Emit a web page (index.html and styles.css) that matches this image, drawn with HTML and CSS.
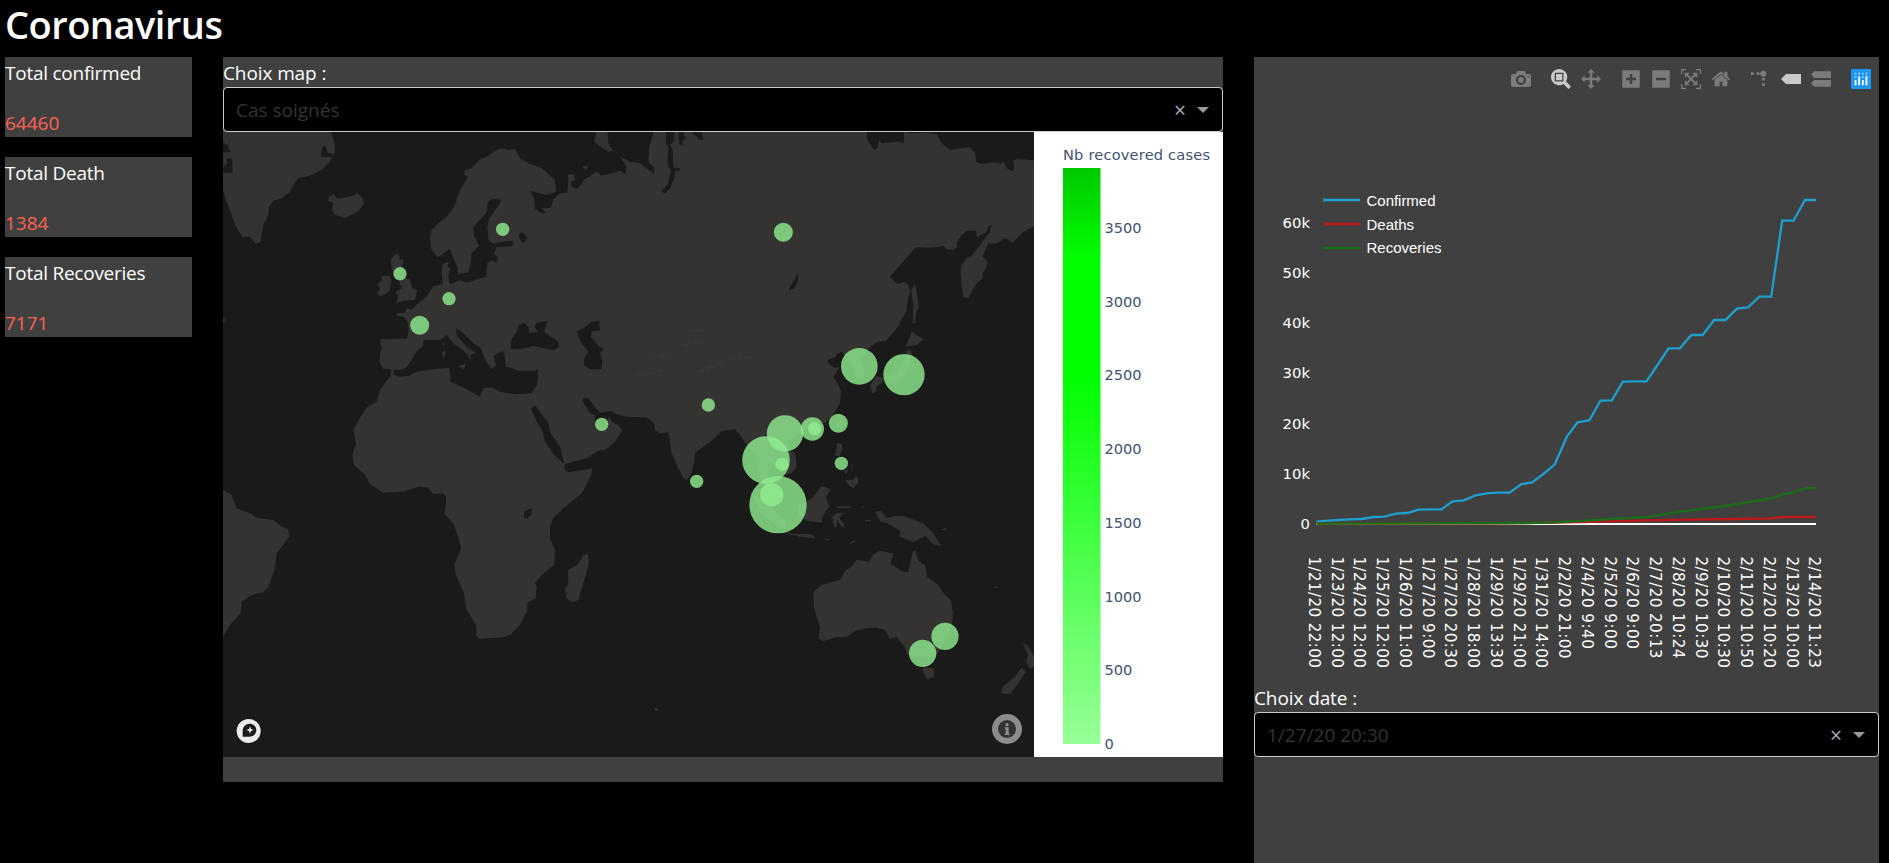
FILE: index.html
```html
<!DOCTYPE html>
<html lang="fr">
<head>
<meta charset="utf-8">
<title>Coronavirus</title>
<link rel="stylesheet" href="styles.css">
</head>
<body>
<h1 class="title">Coronavirus</h1>
<main class="board">
  <section class="totals">
    <div class="card"><p class="card-label">Total confirmed</p><p class="card-value">64460</p></div>
    <div class="card"><p class="card-label">Total Death</p><p class="card-value">1384</p></div>
    <div class="card"><p class="card-label">Total Recoveries</p><p class="card-value">7171</p></div>
  </section>

  <section class="panel map-panel">
    <label class="field-label">Choix map :</label>
    <div class="select"><span class="select-value">Cas soignés</span><span class="clear">×</span><span class="arrow"></span></div>
    <div class="map-row">
      <svg class="map" viewBox="9 6 2433 1875" width="811" height="625">
        <g class="land">
          <!-- Greenland, Iceland, British Isles -->
          <path d="M9 0H330L344 40V68L330 95 305 120 270 137 238 143 225 155 210 185 185 205 160 212 147 230 145 255 130 285 122 335 108 342 88 320 68 322 45 285 30 240 20 215 9 180z"/>
          <path d="M325 200L340 192 353 207 400 197 412 190 428 205 431 222 415 243 395 255 375 264 345 255 335 238 340 220 325 212z"/>
          <path d="M512 388L530 370 540 380 538 390 552 388 545 412 552 440 570 450 577 475 592 480 585 510 550 512 527 520 535 500 527 485 545 475 535 450 520 435 515 415z"/>
          <path d="M487 438L510 437 514 455 508 485 485 497 470 492 480 478 473 462 485 452z"/>
          <!-- Eurasia and Africa -->
          <path d="M800 80L820 65 840 55 865 60 885 57 900 85 925 100 965 115 1005 150 1008 185 980 195 930 183 943 205 945 235 960 248 978 250 965 235 993 233 1000 208 1020 190 1042 188 1045 133 1063 133 1065 150 1053 155 1055 170 1070 177 1083 165 1090 150 1130 125 1145 137 1200 122 1215 132 1220 110 1200 80 1230 95 1260 100 1280 115 1302 132 1303 115 1285 95 1288 50 1303 0H1940L1942 30 1955 50 1963 60 1972 55 1978 30 1985 40 2030 35 2052 40V6L2075 10 2120 8 2150 12 2165 40 2190 60 2220 55 2250 52 2265 70 2268 95 2285 102 2320 97 2342 102 2350 92 2360 115 2375 123 2383 118 2380 92 2390 86 2445 92V287L2410 305 2378 338 2360 325 2350 328 2325 342 2305 340 2298 355 2288 380 2302 395 2298 415 2288 430V445L2270 460 2245 503H2230L2225 470 2222 430 2225 405 2240 385 2255 378 2275 350 2295 325 2308 310 2315 285 2305 288 2300 305 2270 322 2268 302 2240 303 2225 315 2210 340 2212 350 2200 360 2180 358 2170 347 2150 352 2120 353 2093 352 2085 355 2010 440 2032 462 2052 455 2065 465 2070 485 2065 500 2058 545 2030 595 1998 632 1970 635 1948 655 1920 690 1932 710V745L1910 750 1905 720 1895 700 1865 665 1850 672 1845 682 1822 690 1830 705 1845 713 1860 710 1840 742 1855 765 1863 785 1860 820 1845 845 1815 880 1805 875 1780 890 1740 910 1700 935 1715 960 1727 975 1730 1010 1715 1030 1695 1035 1680 1015 1655 1000 1645 1000V1050L1665 1090 1668 1110 1635 1070 1620 1040 1615 1000 1605 970 1590 960 1578 942 1560 915 1545 897 1525 900 1500 905 1495 915 1470 935 1425 968 1422 995 1415 1030 1400 1050 1390 1045 1370 1005 1355 970 1345 907 1320 910 1305 900 1302 880 1280 862 1220 860 1180 850 1180 843 1140 848 1125 830 1105 805 1090 805 1088 815 1110 850 1125 855 1125 885 1155 890 1168 858 1175 875 1195 885 1207 900 1185 935 1160 957 1135 962 1100 985 1035 1002 1033 1015 1043 1027 1075 1022 1117 1015 1112 1040 1085 1090 1030 1135 1000 1165 990 1190V1225L1005 1260 1003 1305 985 1318 965 1335 945 1360 950 1370 947 1405 922 1418 920 1445 900 1485 870 1515 850 1522 780 1527 769 1518 768 1485 738 1435 732 1390 708 1335 703 1305 723 1255 715 1220 700 1180 673 1152 678 1125V1100L670 1090 640 1092 622 1072 595 1070 550 1085 490 1088 450 1062 435 1035 402 1005 397 975 408 940 400 900 418 868 440 832 470 815 480 780 495 758 512 738 514 716 522 722 520 735 540 740 565 738 590 725 640 718 688 714 692 740 690 755 735 775 780 800 790 775 815 772 840 785 885 793 935 790 950 765 955 740 953 718 945 722 895 722 875 715 858 710 855 690 853 665 840 665 820 678 828 705 815 718 795 690 783 655 760 640 725 605 708 595 710 615 740 650 768 670 750 675 755 695 740 670 700 640 680 615 660 630 612 630 608 648 585 670 575 690 560 712 540 720 510 718 490 716 478 695 480 675 485 655 480 632 485 625 495 628 562 625 565 600 563 575 550 560 530 557V550L555 548 560 535 575 540 590 525 620 500 640 468 668 462 665 425 668 402 686 395 683 410 690 415 685 440 690 463 720 450 742 458 770 448 798 440 802 400 815 390 832 400V382L822 370 830 352 878 348 880 332 860 333 820 341 805 330 802 290 808 265 830 235 843 215 840 207H812L803 220 798 250 780 270 760 290 762 318 777 348 755 370 752 400 745 427 713 432 712 410 700 385 690 355 665 375 652 382 635 360 630 325 635 300 655 280 680 260 705 225 720 180 745 140 732 135 735 120 755 115 780 88z"/>
          <path d="M1130 0H1162L1165 40 1178 62 1165 65 1142 50 1123 35z"/>
          <path d="M1088 112L1096 106 1103 110 1098 120z"/>
          <path d="M712 708L738 702 732 717zM668 640H674L672 652zM667 665L677 662 675 680 668 683z"/>
          <!-- East Asia islands -->
          <path d="M2073 480L2085 462 2090 490 2097 530 2088 550 2085 580H2078L2080 520zM2075 605L2110 628 2090 645 2058 650 2065 630z"/>
          <path d="M2070 660L2077 676 2065 720 2040 750 2000 755 2010 738 2040 715 2057 680 2060 662zM1950 765L1970 738 1990 745 1985 760 1968 770V785L1957 790zM1848 895L1852 878 1865 868 1862 885z"/>
          <!-- South-East Asia -->
          <path d="M1587 1080L1615 1105 1660 1140 1695 1165 1700 1195 1680 1195 1630 1155zM1695 1205L1720 1212 1775 1213 1788 1225 1740 1220 1705 1212zM1760 1115L1780 1100 1805 1068 1832 1078 1818 1100 1828 1130 1810 1155 1805 1178 1760 1172 1735 1155 1733 1125z"/>
          <path d="M1837 1160L1850 1148 1872 1150 1857 1162 1875 1190H1865L1852 1172 1848 1193 1842 1190zM1850 1129H1892V1134H1850zM1925 1125L1931 1128 1929 1138zM1935 1170H1953V1173H1935zM1885 1243L1900 1232 1910 1231 1898 1239zM1815 1227H1830V1230H1815z"/>
          <path d="M1852 938L1865 942 1868 955 1858 980 1845 975zM1875 1050H1898L1910 1037 1915 1055 1902 1075 1888 1068zM1870 1022L1884 1020 1880 1033zM1894 1005L1899 1008 1896 1019z"/>
          <path d="M1965 1145L1982 1143 2000 1165 2025 1157 2050 1158 2110 1180 2137 1207 2163 1247 2140 1243 2115 1218 2080 1237 2040 1220V1202L2000 1178 1982 1175zM2160 1198L2172 1197 2182 1190 2176 1201z"/>
          <!-- Australia, Tasmania, New Zealand -->
          <path d="M1780 1385L1805 1365 1860 1350 1875 1322 1892 1312 1910 1290 1932 1292 1945 1297 1960 1273 1980 1263 2020 1270 2012 1300 2045 1323 2065 1327 2078 1265 2085 1260 2095 1292 2115 1305 2122 1340 2155 1365 2170 1388 2192 1410 2199 1450 2195 1490 2160 1560 2145 1580 2090 1580 2060 1575 2057 1555 2045 1540 2030 1520 2010 1528 1995 1500 1965 1492 1910 1500 1880 1520 1845 1522 1810 1533 1795 1525 1800 1490 1782 1435z"/>
          <path d="M2108 1613L2143 1615 2140 1640 2122 1648 2110 1630zM2405 1613L2417 1625 2395 1660 2370 1693 2342 1690 2350 1668 2385 1640zM2408 1538L2420 1545 2445 1580V1610L2430 1615 2418 1595 2425 1575zM1303 1737L1308 1733 1317 1741 1306 1742zM2322 1370H2334V1373H2322z"/>
          <!-- Madagascar, South America -->
          <path d="M1090 1275L1103 1272 1107 1300 1090 1360 1075 1410 1055 1417 1040 1405 1035 1380 1045 1360 1044 1320 1075 1302zM9 1080L35 1095 50 1135 90 1150 110 1163 160 1170 185 1190 205 1197 208 1220 170 1270 163 1320 145 1370 130 1386 95 1395 65 1415 62 1450 30 1485 9 1520zM9 563L16 570 9 578z"/>
        </g>
        <g class="water">
          <path d="M302 76L308 48 316 46 322 68 338 72 336 82 304 80zM9 35L22 45 33 65 9 68zM20 85L36 84 38 128H9L10 112 22 100z"/>
          <path d="M1340 0H1365L1360 35 1350 45 1358 60 1360 113 1382 115 1378 122 1365 125 1363 145 1350 175 1335 190 1325 185 1345 160 1352 120 1342 100 1345 50 1337 40zM1375 0H1390L1392 20 1400 22 1385 35 1392 45 1378 45zM1405 0L1445 10 1450 28 1440 32 1430 20z"/>
          <path d="M872 655L873 630 890 605 895 588 910 578 925 590 928 608 952 605 943 590 950 578 983 573 972 605 1015 635 1017 650 1000 661 970 655 940 648 900 658 875 657zM1072 603L1095 592 1115 575 1137 573 1140 600 1115 605 1113 620 1135 648 1152 658 1140 668 1147 690 1145 718 1110 718 1092 705 1093 685 1105 665 1085 640 1075 620zM898 308H910L923 325 910 340 898 325z"/>
          <path d="M1735 428L1733 455 1722 475 1705 482 1715 462zM933 835L945 826 970 860 985 880 992 910 1010 935 1022 955 1033 1002 1000 972 975 935 968 905 950 875zM912 1145L935 1135V1153L920 1167 912 1165z"/>
        </g>
        <g class="ridge">
          <path d="M1250 735L1290 732 1325 720M1290 688L1320 680 1355 675M1395 645L1430 635 1460 630M1435 725L1480 710 1515 690 1595 682M1410 605L1450 600"/>
        </g>
        <g class="cases">
          <circle cx="540" cy="431" r="20"/><circle cx="687" cy="506" r="20"/><circle cx="599" cy="586" r="28.5"/>
          <circle cx="848" cy="298" r="20"/><circle cx="1465" cy="825" r="20"/><circle cx="1145" cy="883" r="20"/>
          <circle cx="1690" cy="307" r="28.5"/><circle cx="1918" cy="709" r="55"/><circle cx="2052" cy="734" r="62"/>
          <circle cx="1855" cy="880" r="28.5"/><circle cx="1695" cy="910" r="54.5"/><circle cx="1638" cy="990" r="71.5"/>
          <circle cx="1674" cy="1124" r="86"/><circle cx="1777" cy="897" r="35"/><circle cx="1784" cy="896" r="20"/>
          <circle cx="1686" cy="1003" r="20"/><circle cx="1655" cy="1094" r="35"/><circle cx="1864" cy="1000" r="20"/>
          <circle cx="1430" cy="1054" r="20"/><circle cx="2175" cy="1519" r="41"/><circle cx="2108" cy="1570" r="41"/>
        </g>
        <g transform="translate(86 1803)">
          <circle r="36" fill="#ececec"/>
          <path d="M-18 17V-1C-18-13-9-22 3-22 14-22 23-14 23-3 23 10 12 17 0 17z" fill="#1a1a1a"/>
          <path d="M4-14L7-6 15-3 7 0 4 8 1 0-7-3 1-6z" fill="#ececec"/>
        </g>
        <g transform="translate(2361 1797)">
          <circle r="45" fill="#8c8c8c"/><circle r="27" fill="#333"/>
          <circle cy="-13" r="5" fill="#8c8c8c"/><path d="M-7-5H5V14H8V18H-7V14H-4V-1H-7z" fill="#8c8c8c"/>
        </g>
      </svg>
      <svg class="scale" width="189" height="625">
        <defs><linearGradient id="ramp" x1="0" y1="0" x2="0" y2="1">
          <stop offset="0" stop-color="#00c800"/><stop offset=".16" stop-color="#0f0"/><stop offset=".36" stop-color="#0f0"/><stop offset="1" stop-color="#98ff98"/>
        </linearGradient></defs>
        <text class="scale-title" x="29" y="28" textLength="147">Nb recovered cases</text>
        <rect x="29" y="36" width="37.5" height="576" fill="url(#ramp)"/>
        <text x="70.5" y="100.5">3500</text><text x="70.5" y="174.5">3000</text><text x="70.5" y="248">2500</text><text x="70.5" y="321.5">2000</text>
        <text x="70.5" y="395.5">1500</text><text x="70.5" y="469.5">1000</text><text x="70.5" y="543">500</text><text x="70.5" y="617">0</text>
      </svg>
    </div>
  </section>

  <section class="panel chart-panel">
    <div class="graph">
      <div class="modebar">
        <svg class="tool" viewBox="0 0 1000 1000"><path transform="matrix(1 0 0 -1 0 850)" d="m500 450c-83 0-150-67-150-150 0-83 67-150 150-150 83 0 150 67 150 150 0 83-67 150-150 150z m400 150h-120c-16 0-34 13-39 29l-31 93c-6 15-23 28-40 28h-340c-16 0-34-13-39-28l-31-94c-6-15-23-28-40-28h-120c-55 0-100-45-100-100v-450c0-55 45-100 100-100h800c55 0 100 45 100 100v450c0 55-45 100-100 100z m-400-550c-138 0-250 112-250 250 0 138 112 250 250 250 138 0 250-112 250-250 0-138-112-250-250-250z m365 380c-19 0-35 16-35 35 0 19 16 35 35 35 19 0 35-16 35-35 0-19-16-35-35-35z"/></svg>
        <svg class="tool group active" viewBox="0 0 1000 1000"><path transform="matrix(1 0 0 -1 0 850)" d="m1000-25l-250 251c40 63 63 138 63 218 0 224-182 406-407 406-224 0-406-182-406-406s183-406 407-406c80 0 155 22 218 62l250-250 125 125z m-812 250l0 438 437 0 0-438-437 0z m62 375l313 0 0-312-313 0 0 312z"/></svg>
        <svg class="tool" viewBox="0 0 1000 1000"><path transform="matrix(1 0 0 -1 0 850)" d="m1000 350l-187 188 0-125-250 0 0 250 125 0-188 187-187-187 125 0 0-250-250 0 0 125-188-188 186-187 0 125 252 0 0-250-125 0 187-188 188 188-125 0 0 250 250 0 0-126 187 188z"/></svg>
        <svg class="tool group" viewBox="0 0 875 1000"><path transform="matrix(1 0 0 -1 0 850)" d="m1 787l0-875 875 0 0 875-875 0z m687-500l-187 0 0-187-125 0 0 187-188 0 0 125 188 0 0 187 125 0 0-187 187 0 0-125z"/></svg>
        <svg class="tool" viewBox="0 0 875 1000"><path transform="matrix(1 0 0 -1 0 850)" d="m0 788l0-876 875 0 0 876-875 0z m688-500l-500 0 0 125 500 0 0-125z"/></svg>
        <svg class="tool" viewBox="0 0 1000 1000"><path transform="matrix(1 0 0 -1 0 850)" d="m250 850l-187 0-63 0 0-62 0-188 63 0 0 188 187 0 0 62z m688 0l-188 0 0-62 188 0 0-188 62 0 0 188 0 62-62 0z m-875-938l0 188-63 0 0-188 0-62 63 0 187 0 0 62-187 0z m875 188l0-188-188 0 0-62 188 0 62 0 0 62 0 188-62 0z m-125 188l-1 0-93-94-156 156 156 156 92-93 2 0 0 250-250 0 0-2 93-92-156-156-156 156 94 92 0 2-250 0 0-250 0 0 93 93 157-156-157-156-93 94 0 0 0-250 250 0 0 0-94 93 156 157 156-157-93-93 0 0 250 0 0 250z"/></svg>
        <svg class="tool" viewBox="0 0 928.6 1000"><path transform="matrix(1 0 0 -1 0 850)" d="m786 296v-267q0-15-11-26t-25-10h-214v214h-143v-214h-214q-15 0-25 10t-11 26v267q0 1 0 2t0 2l321 264 321-264q1-1 1-4z m124 39l-34-41q-5-5-12-6h-2q-7 0-12 3l-386 322-386-322q-7-4-13-4-7 2-12 7l-35 41q-4 5-3 13t6 12l401 334q18 15 42 15t43-15l136-114v109q0 8 5 13t13 5h107q8 0 13-5t5-13v-227l122-102q5-5 6-12t-4-13z"/></svg>
        <svg class="tool group" viewBox="0 0 1000 1000"><path transform="matrix(1.5 0 0 -1.5 0 850)" d="M512 409c0-57-46-104-103-104-57 0-104 47-104 104 0 57 47 103 104 103 57 0 103-46 103-103z m-327-39l92 0 0 92-92 0z m-185 0l92 0 0 92-92 0z m370-186l92 0 0 93-92 0z m0-184l92 0 0 92-92 0z"/></svg>
        <svg class="tool active" viewBox="0 0 1500 1000"><path transform="matrix(1 0 0 -1 0 850)" d="m375 725l0 0-375-375 375-374 0-1 1125 0 0 750-1125 0z"/></svg>
        <svg class="tool" viewBox="0 0 1125 1000"><path transform="matrix(1 0 0 -1 0 850)" d="m187 786l0 2-187-188 188-187 0 0 937 0 0 373-938 0z m0-499l0 1-187-188 188-188 0 0 937 0 0 376-938-1z"/></svg>
        <svg class="tool group" viewBox="0 0 132 132"><rect width="132" height="132" rx="7" fill="#1e96f3"/><path fill="#8fd6fb" d="M24 24h12v12H24zM48 24h12v12H48zM72 24h12v12H72zM96 24h12v12H96zM24 48h12v12H24zM72 48h12v12H72z"/><path fill="#fff" d="M24 72h12v36H24zM48 48h12v60H48zM72 72h12v36H72zM96 48h12v60H96z"/></svg>
      </div>
      <svg class="chart" width="625" height="580" viewBox="1254 102 625 580">
        <g class="yaxis">
          <text x="1310" y="228" textLength="27.5">60k</text><text x="1310" y="278" textLength="27.5">50k</text><text x="1310" y="328" textLength="27.5">40k</text><text x="1310" y="378" textLength="27.5">30k</text><text x="1310" y="429" textLength="27.5">20k</text><text x="1310" y="479" textLength="27.5">10k</text><text x="1310" y="529">0</text>
        </g>
        <path d="M1316 524H1816" stroke="#fff" stroke-width="2"/>
        <g class="series" transform="translate(1250 170) scale(.4075 .33333)">
          <path stroke="#1e9fce" d="M163 1055L191 1052 219 1050 246 1048 274 1047 302 1041 330 1040 358 1031 386 1029 414 1019 442 1018 470 1018 497 994 525 991 553 976 581 970 609 968 637 968 665 943 692 937 720 912 748 883 778 799 804 757 833 751 860 692 888 691 915 635 943 634 973 634 1000 585 1027 535 1055 535 1083 495 1111 495 1139 450 1167 450 1195 416 1222 412 1250 380 1279 380 1306 152 1334 152 1362 90 1389 90"/>
          <path stroke="#c01818" d="M163 1061L600 1060 748 1058 860 1055 973 1051 1083 1049 1195 1047 1279 1045 1306 1041 1389 1041"/>
          <path stroke="#1a6e1a" d="M163 1061L680 1059 748 1057 833 1051 915 1045 973 1041 1055 1025 1167 1008 1279 985 1306 973 1334 967 1362 955 1389 954"/>
        </g>
        <g class="series"><path stroke="#1e9fce" d="M1323 200H1360"/><path stroke="#c01818" d="M1323 224H1360"/><path stroke="#1a6e1a" d="M1323 248H1360"/></g>
        <g class="legend">
          <text x="1366.5" y="206" textLength="69">Confirmed</text><text x="1366.5" y="230" textLength="47.5">Deaths</text><text x="1366.5" y="253" textLength="75">Recoveries</text>
        </g>
        <g class="xaxis" id="xaxis"></g>
      </svg>
    </div>
    <label class="field-label">Choix date :</label>
    <div class="select"><span class="select-value">1/27/20 20:30</span><span class="clear">×</span><span class="arrow"></span></div>
  </section>
</main>
<script src="axis.js"></script>
</body>
</html>
```
FILE: styles.css
```css
* { box-sizing: border-box; }
body {
  margin: 0;
  height: 863px;
  padding: 0 10px 0 5px;
  overflow: hidden;
  background: #000;
  color: #fff;
  font: 19px/30px "Open Sans", "Noto Sans", sans-serif;
}
p { margin: 0; }
.title {
  margin: 0;
  height: 57px;
  font-size: 38px;
  font-weight: 600;
  line-height: 49px;
  letter-spacing: -.5px;
}
.board {
  display: grid;
  grid-template-columns: 187px 1000px 625px;
  column-gap: 31px;
  align-items: start;
}
.totals { display: grid; row-gap: 20px; }
.card {
  display: flex;
  flex-direction: column;
  justify-content: space-between;
  height: 80px;
  background: #404040;
  letter-spacing: -.25px;
}
.card-label { line-height: 32px; }
.card-value { line-height: 28px; color: #ff6352; letter-spacing: 0; }
.panel { background: #404040; }
.map-panel { height: 725px; }
.chart-panel { height: 806px; }
.field-label { display: block; height: 30px; line-height: 32px; letter-spacing: -.1px; }
.select {
  display: flex;
  align-items: center;
  height: 45px;
  padding: 0 13px 0 12px;
  border: 1px solid #ccc;
  border-radius: 4px;
  background: #000;
}
.select-value { flex: 1; color: #333; }
.clear { width: 12px; margin-right: 11px; color: #aaa; text-align: center; font-size: 21px; line-height: 40px; }
.arrow { border: 6px solid transparent; border-top: 6px solid #999; border-bottom: 0; }
.map-row { display: flex; }
.map { display: block; background: #1a1a1a; }
.land { fill: #353332; }
.water { fill: #1a1a1a; }
.ridge { fill: none; stroke: #3c3a39; stroke-width: 4; stroke-dasharray: 18 9 30 6; }
.cases { fill: #90ee90; fill-opacity: .8; }
.scale {
  display: block;
  background: #fff;
  fill: #42536f;
  font: 14.6px "DejaVu Sans", sans-serif;
}
.graph { height: 625px; }
.modebar { display: flex; gap: 10px; justify-content: flex-end; height: 45px; padding: 12px 8px 0 0; }
.tool { width: 20px; height: 20px; fill: #7b7b7b; }
.tool.group { margin-left: 10px; }
.tool.active { fill: #c9c9c9; }
.chart { display: block; fill: #fff; }
.yaxis { font: 14.8px "DejaVu Sans", sans-serif; text-anchor: end; }
.xaxis { font: 15.2px "DejaVu Sans", sans-serif; }
.legend { font: 15px "Liberation Sans", sans-serif; }
.series { fill: none; stroke-width: 2.3; }
.series path { vector-effect: non-scaling-stroke; }
```
FILE: axis.js
```js
const dates = ['1/21/20 22:00', '1/23/20 12:00', '1/24/20 12:00', '1/25/20 12:00', '1/26/20 11:00', '1/27/20 9:00',
  '1/27/20 20:30', '1/28/20 18:00', '1/29/20 13:30', '1/29/20 21:00', '1/31/20 14:00', '2/2/20 21:00', '2/4/20 9:40',
  '2/5/20 9:00', '2/6/20 9:00', '2/7/20 20:13', '2/8/20 10:24', '2/9/20 10:30', '2/10/20 10:30', '2/11/20 10:50',
  '2/12/20 10:20', '2/13/20 10:00', '2/14/20 11:23'];
const axis = document.getElementById('xaxis');
dates.forEach((date, i) => {
  const label = document.createElementNS('http://www.w3.org/2000/svg', 'text');
  label.setAttribute('transform', `translate(${1308.8 + i * 22.75} 556.5) rotate(90)`);
  label.setAttribute('textLength', 111.5 - (13 - date.length) * 9.6);
  label.textContent = date;
  axis.append(label);
});
```
